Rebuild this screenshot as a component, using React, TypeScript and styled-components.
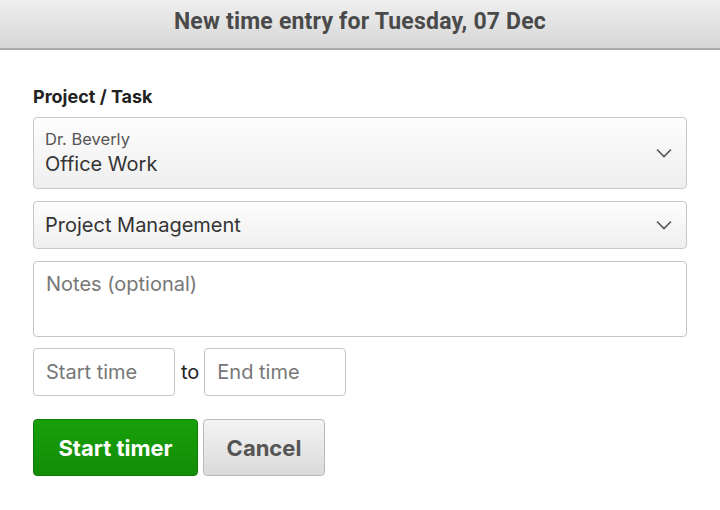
import React from "react";
import styled, { createGlobalStyle } from "styled-components";

const Global = createGlobalStyle`
  html, body { margin: 0; padding: 0; background: #fff; }
  body { font-family: Inter, "Noto Sans", sans-serif; color: #222; }
  * { box-sizing: border-box; }
`;

const Page = styled.div`
  width: 720px;
  height: 510px;
  background: #fff;
  display: flex;
  flex-direction: column;
`;

const Header = styled.div`
  height: 50px;
  display: flex;
  align-items: center;
  justify-content: center;
  padding-bottom: 6px;
  background: linear-gradient(#efefef, #d6d6d6);
  border-bottom: 2px solid #a9a9a9;
`;

const Title = styled.h1`
  margin: 0;
  font-family: Roboto, sans-serif;
  font-weight: 700;
  font-size: 23px;
  letter-spacing: 0.2px;
  color: #4a4a4a;
`;

const Form = styled.div`
  display: flex;
  flex-direction: column;
  padding: 36px 33px 0;
`;

const Label = styled.div`
  font-weight: 700;
  font-size: 18px;
  line-height: 22px;
  color: #222;
  margin-bottom: 9px;
`;

const Select = styled.div<{ $h: number; $mb: number }>`
  height: ${(p) => p.$h}px;
  margin-bottom: ${(p) => p.$mb}px;
  border: 1px solid #c9c9c9;
  border-radius: 4px;
  background: linear-gradient(#fdfdfd, #efefef);
  display: flex;
  align-items: center;
  justify-content: space-between;
  padding: 0 14px 0 11px;
`;

const SelectText = styled.div`
  display: flex;
  flex-direction: column;
  gap: 2px;
`;

const SubText = styled.div`
  font-size: 16.5px;
  line-height: 20px;
  color: #555;
`;

const MainText = styled.div`
  font-size: 20px;
  line-height: 26px;
  color: #333;
`;

const Notes = styled.div`
  height: 76px;
  margin-bottom: 11px;
  border: 1px solid #c4c4c4;
  border-radius: 4px;
  background: #fff;
  padding: 10px 12px;
  font-size: 20px;
  line-height: 24px;
  color: #777;
`;

const TimeRow = styled.div`
  display: flex;
  align-items: center;
  gap: 5px;
  margin-bottom: 23px;
`;

const TimeBox = styled.div`
  width: 142px;
  height: 48px;
  border: 1px solid #c4c4c4;
  border-radius: 4px;
  background: #fff;
  display: flex;
  align-items: center;
  padding: 0 12px;
  font-size: 20px;
  color: #777;
`;

const To = styled.span`
  font-size: 20px;
  color: #222;
  padding-left: 1px;
`;

const ButtonRow = styled.div`
  display: flex;
  gap: 5px;
`;

const Button = styled.button<{ $primary?: boolean; $w: number }>`
  width: ${(p) => p.$w}px;
  height: 57px;
  border-radius: 4px;
  font-family: Inter, sans-serif;
  font-weight: 700;
  font-size: 22px;
  cursor: pointer;
  ${(p) =>
    p.$primary
      ? `background: linear-gradient(#18a00a, #138c07);
         border: 1px solid #117a06;
         color: #fff;`
      : `background: linear-gradient(#f4f4f4, #dadada);
         border: 1px solid #b9b9b9;
         color: #555;`}
`;

const Chevron = () => (
  <svg width="16" height="10" viewBox="0 0 16 10">
    <polyline points="1,1.5 8,8.5 15,1.5" fill="none" stroke="#555" strokeWidth="1.6" />
  </svg>
);

export default function App() {
  return (
    <Page>
      <Global />
      <Header>
        <Title>New time entry for Tuesday, 07 Dec</Title>
      </Header>
      <Form>
        <Label>Project / Task</Label>
        <Select $h={72} $mb={12}>
          <SelectText>
            <SubText>Dr. Beverly</SubText>
            <MainText>Office Work</MainText>
          </SelectText>
          <Chevron />
        </Select>
        <Select $h={48} $mb={12}>
          <MainText>Project Management</MainText>
          <Chevron />
        </Select>
        <Notes>Notes (optional)</Notes>
        <TimeRow>
          <TimeBox>Start time</TimeBox>
          <To>to</To>
          <TimeBox>End time</TimeBox>
        </TimeRow>
        <ButtonRow>
          <Button $primary $w={165}>Start timer</Button>
          <Button $w={122}>Cancel</Button>
        </ButtonRow>
      </Form>
    </Page>
  );
}
